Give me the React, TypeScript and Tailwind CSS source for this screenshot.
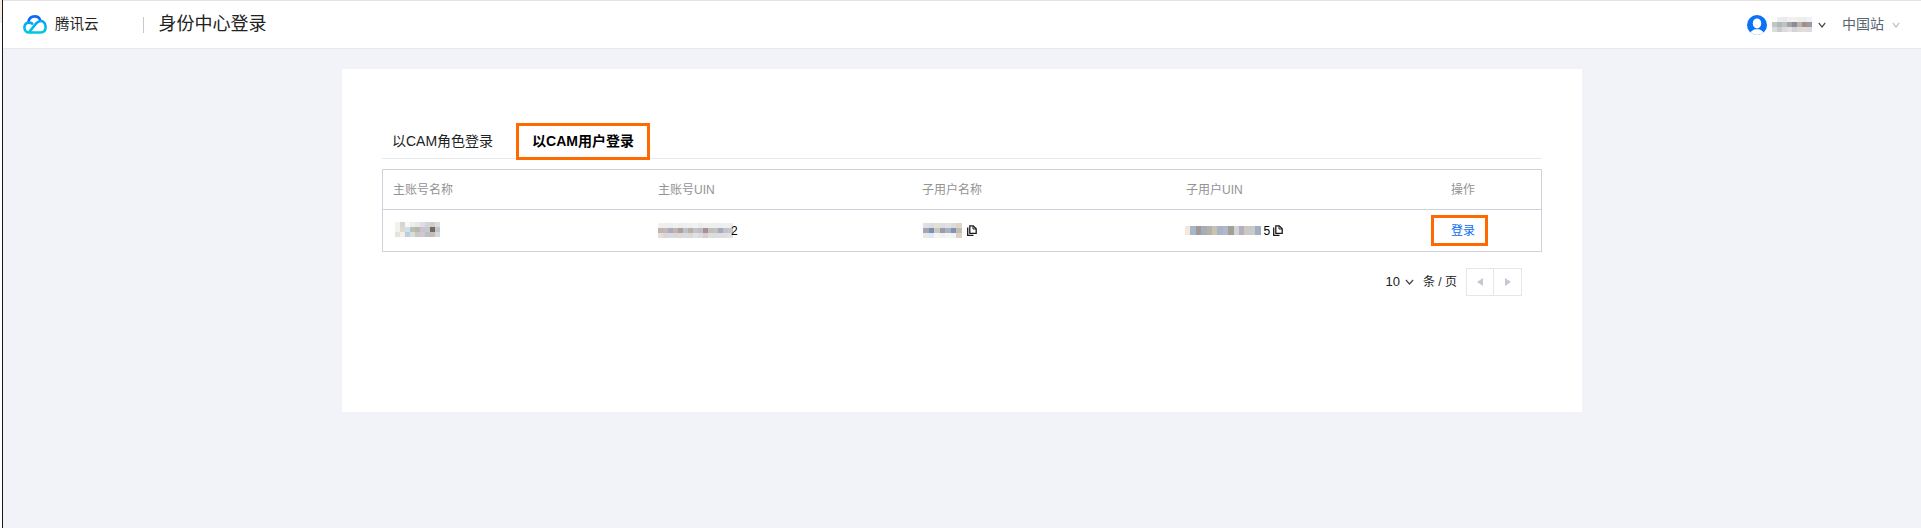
import React from "react";

const FONT = "font-['Liberation_Sans','Noto_Sans_CJK_SC',sans-serif]";

function Mosaic({ rows, cell = 5, h = 5 }: { rows: string[][]; cell?: number; h?: number }) {
  const w = rows[0].length * cell;
  return (
    <svg width={w} height={rows.length * h} viewBox={`0 0 ${w} ${rows.length * h}`} shapeRendering="crispEdges" className="block shrink-0">
      {rows.map((r, y) => r.map((c, x) => <rect key={`${x}-${y}`} x={x * cell} y={y * h} width={cell} height={h} fill={c} />))}
    </svg>
  );
}

const m1 = [
  ["#ffffff", "#f2f2ef", "#d4d6d6", "#f6f9fb", "#eceee9", "#e8e9e4", "#e2dbe4", "#d2d5d8", "#cfcdc9", "#dcdcda"],
  ["#ffffff", "#f1f1ee", "#e2d8cc", "#cfe0ec", "#b9bfb2", "#b4b9ab", "#cbc0d4", "#c6c9cb", "#726a62", "#c1c5c9"],
  ["#ffffff", "#e6e2dc", "#f0f0ec", "#b8cfe0", "#d9dcd8", "#c8c8c2", "#cfc7d2", "#bcc0c4", "#c2bdb6", "#d5d7da"],
];
const m2 = [
  ["#f1f0ef", "#f1efee", "#eeeef0", "#f0eff1", "#ebeef0", "#efefed", "#eeeff1", "#f3f2f2", "#ecebeb", "#eff0ee", "#f0eff0", "#eeeff1", "#edeeee", "#eff0f1", "#edeeef"],
  ["#c0b5b3", "#c5b8b6", "#a9acc0", "#bdb6b5", "#ae9f98", "#bdc3c8", "#b5b1a4", "#c1c4d0", "#c2bdbd", "#a89099", "#bfc0bc", "#c4c2c0", "#a7a9b9", "#c2c3c8", "#c5c7cc"],
  ["#e3dfdb", "#dcd7d5", "#d9d9e0", "#dcd7d6", "#dcd8d2", "#d5dde3", "#dcd8d1", "#e0e0e6", "#dedad9", "#d7ccd0", "#dedfdc", "#dddcd9", "#dcdde3", "#dedfe2", "#e0e2e5"],
];
const m3 = [
  ["#dfe0e2", "#d9dcdc", "#e1e1dc", "#dddde0", "#dfe1e4", "#dddcd8", "#dcd5c8"],
  ["#a3a6b5", "#7d8fb0", "#c9c9c1", "#9b9ea4", "#a9b2c2", "#7f93b5", "#c4bcae"],
  ["#efe9e4", "#dfe9f2", "#f4f4f2", "#eef0f2", "#f3f4f6", "#f1f2f4", "#d9d2c6"],
];
const m4 = [
  ["#f4e8dc", "#a9b6c8", "#a09a96", "#a7adb8", "#b5b3a6", "#c9c3b2", "#aab4c8", "#b0b9c8", "#a39f96", "#cdd6d2", "#b9aec0", "#ccc8c4", "#c9cbcb", "#a2afbf"],
];
const m5 = [
  ["#ffffff", "#eceeee", "#e8eaec", "#f1f1f3", "#f1f1f1", "#eeeeee", "#eceded", "#f1f1f1"],
  ["#c2c5c8", "#b2b8b8", "#bfc2c2", "#a3a2a8", "#8d8c94", "#b9b4b0", "#a38f88", "#9a9ba3"],
  ["#d9dbdd", "#c9cbcd", "#e0dad6", "#e3e3e6", "#d4d4d8", "#dddbd9", "#e4dcd8", "#d9dbe0"],
];

function CopyIcon() {
  return (
    <svg width="10" height="11" viewBox="0 0 10 11" className="shrink-0" fill="none" stroke="#1c1c1c" strokeWidth="1.3">
      <path d="M0.7 2.5V10.3H6.5" />
      <path d="M2.8 0.8H6.2L9.2 3.8V8.4H2.8Z" />
      <path d="M6 1V4H9" strokeWidth="1" />
    </svg>
  );
}

function Logo() {
  return (
    <svg width="24" height="19" viewBox="0 0 24 19" fill="none" strokeLinecap="round" strokeWidth="2.6" className="shrink-0">
      <defs>
        <linearGradient id="lg" x1="0" y1="0" x2="0" y2="1">
          <stop offset="0" stopColor="#00a4ff" />
          <stop offset="1" stopColor="#00c8dc" />
        </linearGradient>
      </defs>
      <path d="M5.2 7.5C5.8 3.6 8.6 1.4 11.8 1.4C14.4 1.4 16.3 2.8 17.2 5" stroke="#0a6cf5" />
      <path d="M9.2 8.6C8 7.8 7 7.5 5.8 7.6C3 7.8 1.4 10 1.4 12.4C1.4 15.4 3.4 17.5 6 17.5H17.6C20.6 17.5 22.6 15.4 22.6 12C22.6 8.8 20.6 6 17.8 6C16 6 14.6 7 13.4 8.2L7 16" stroke="url(#lg)" />
    </svg>
  );
}

function Avatar() {
  return (
    <svg width="20" height="20" viewBox="0 0 20 20" className="shrink-0">
      <defs>
        <clipPath id="av"><circle cx="10" cy="10" r="10" /></clipPath>
      </defs>
      <circle cx="10" cy="10" r="10" fill="#0a72f5" />
      <g clipPath="url(#av)" fill="#ffffff">
        <ellipse cx="10" cy="8.4" rx="4.2" ry="5" />
        <path d="M2.5 20C3 16.2 6 15 8 14.2L12 14.2C14 15 17 16.2 17.5 20Z" />
      </g>
    </svg>
  );
}

function Chevron({ color, w = 8 }: { color: string; w?: number }) {
  return (
    <svg width={w} height="6" viewBox="0 0 10 6" preserveAspectRatio="none" fill="none" stroke={color} strokeWidth="1.4" className="shrink-0">
      <path d="M1 1L5 5L9 1" />
    </svg>
  );
}

const cols = "grid grid-cols-[265px_264px_264px_264px_1fr]";

export default function App() {
  return (
    <div className={`flex h-[528px] w-full overflow-hidden bg-white ${FONT}`}>
      <div className="w-[2px] shrink-0">
        <div className="h-[23px] bg-[#f6ece6]" />
      </div>
      <div className="w-px shrink-0 bg-[#1a1a1a]" />
      <div className="flex min-w-0 flex-1 flex-col">
        <div className="h-[1px] shrink-0 bg-[#e3e3e3]" />
        <header className="flex h-[48px] shrink-0 items-center justify-between border-b border-[#e7eaef] bg-white">
          <div className="flex items-center">
            <div className="ml-[20px] flex items-center gap-[8px]">
              <Logo />
              <span className="text-[14.5px] text-[#222222]">腾讯云</span>
            </div>
            <div className="ml-[44px] h-[16px] w-px bg-[#c8c8c8]" />
            <span className="ml-[15px] text-[18px] text-[#222222]">身份中心登录</span>
          </div>
          <div className="flex items-center pr-[21px]">
            <Avatar />
            <div className="ml-[5px]"><Mosaic rows={m5} cell={5} h={5} /></div>
            <div className="ml-[6px]"><Chevron color="#444444" /></div>
            <span className="ml-[16px] text-[14px] text-[#5b6472]">中国站</span>
            <div className="ml-[8px]"><Chevron color="#b9bfc9" /></div>
          </div>
        </header>
        <main className="flex flex-1 justify-center bg-[#f2f3f8] pt-[20px]">
          <div className="h-[343px] w-[1240px] bg-white px-[40px] pt-[54px]">
            <div className="flex h-[36px] items-stretch border-b border-[#e7eaef]">
              <div className="flex w-[134px] items-center pl-[10px] pt-[2px] text-[14px] text-[#222222]">以CAM角色登录</div>
              <div className="flex h-[37px] w-[134px] items-center justify-center border-[3px] border-[#ff6a00] text-[14px] font-bold text-[#000000]">以CAM用户登录</div>
            </div>
            <div className="mt-[10px] border border-[#cfd2dc]">
              <div className={`${cols} h-[40px] items-center border-b border-[#cfd2dc] text-[12px] text-[#939393]`}>
                <div className="pl-[10px]">主账号名称</div>
                <div className="pl-[10px]">主账号UIN</div>
                <div className="pl-[10px]">子用户名称</div>
                <div className="pl-[10px]">子用户UIN</div>
                <div className="pl-[11px]">操作</div>
              </div>
              <div className={`${cols} h-[41px] items-center text-[12px] text-[#000000]`}>
                <div className="pb-[2px] pl-[7px]"><Mosaic rows={m1} /></div>
                <div className="flex items-center pl-[10px]">
                  <Mosaic rows={m2} />
                  <span className="-ml-[2px]">2</span>
                </div>
                <div className="flex items-center gap-[5px] pl-[11px]">
                  <Mosaic rows={m3} cell={5.5} />
                  <CopyIcon />
                </div>
                <div className="flex items-center gap-[3px] pl-[9px]">
                  <Mosaic rows={m4} h={9} cell={5.4} />
                  <span>5</span>
                  <CopyIcon />
                </div>
                <div className="-ml-[9px]">
                  <div className="flex h-[31px] w-[57px] items-center justify-center border-[3px] border-[#ff6a00] pl-[7px] text-[#0a6cf5]">登录</div>
                </div>
              </div>
            </div>
            <div className="mt-[16px] flex items-center justify-end pr-[20px]">
              <span className="text-[13px] text-[#222222]">10</span>
              <div className="ml-[5px]"><Chevron color="#444444" w={9} /></div>
              <span className="ml-[9px] text-[12px] text-[#222222]">条 / 页</span>
              <div className="ml-[9px] flex">
                <div className="flex h-[28px] w-[28px] items-center justify-center border border-[#e3e6ed]">
                  <svg width="6" height="8" viewBox="0 0 6 8"><path d="M6 0V8L0 4Z" fill="#c4c8d0" /></svg>
                </div>
                <div className="-ml-px flex h-[28px] w-[29px] items-center justify-center border border-[#e3e6ed]">
                  <svg width="6" height="8" viewBox="0 0 6 8"><path d="M0 0V8L6 4Z" fill="#c4c8d0" /></svg>
                </div>
              </div>
            </div>
          </div>
        </main>
      </div>
    </div>
  );
}
